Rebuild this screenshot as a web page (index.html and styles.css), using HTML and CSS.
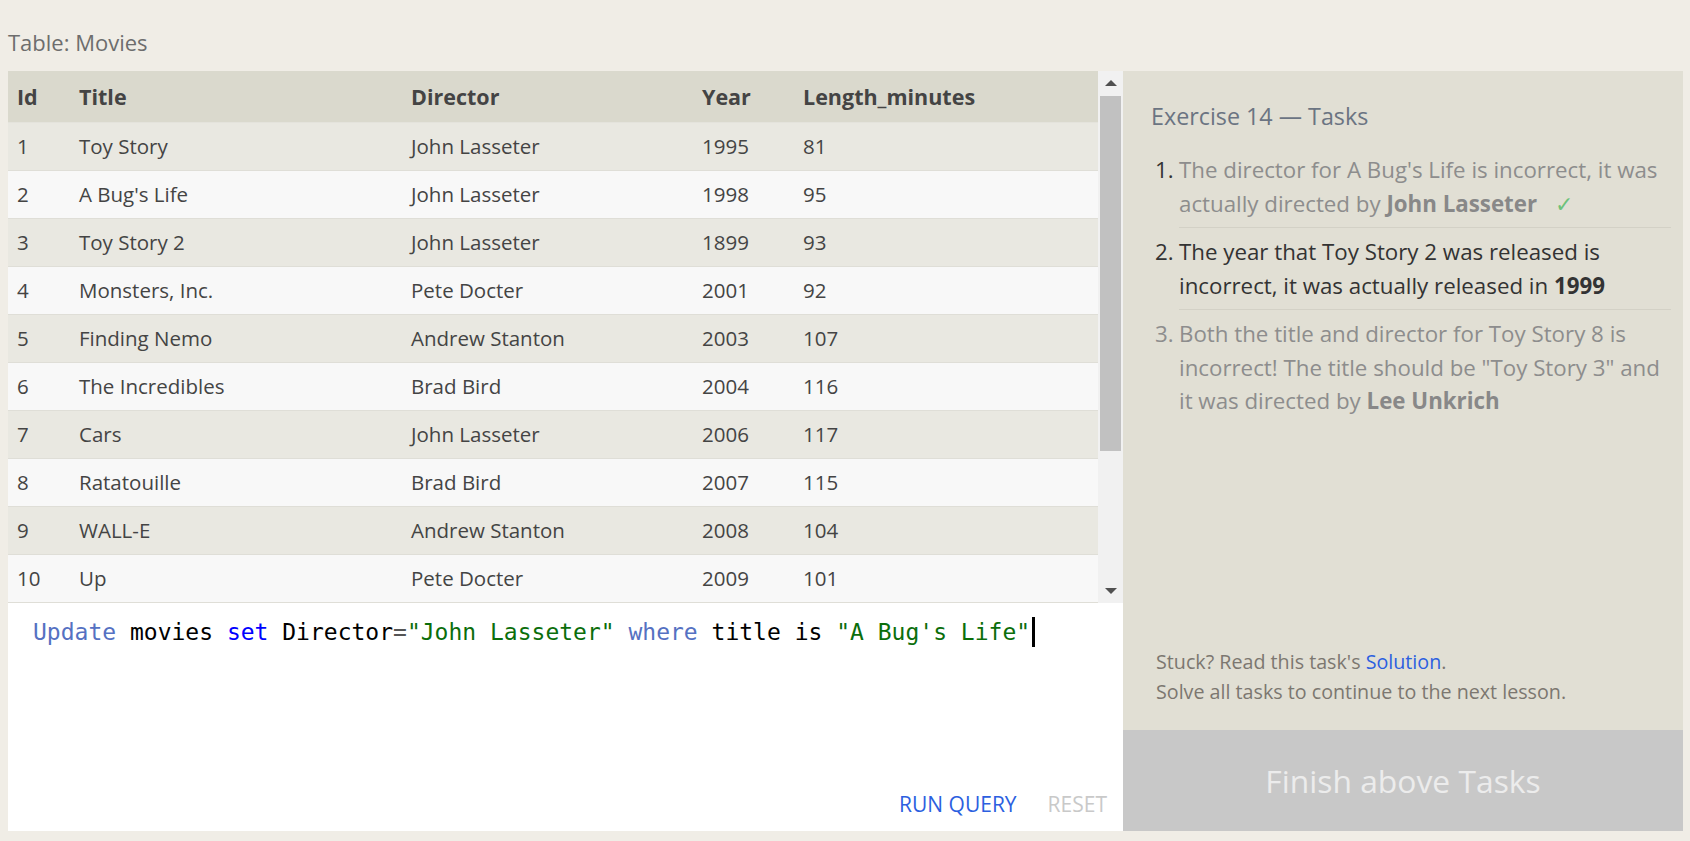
FILE: index.html
```html
<!DOCTYPE html>
<html lang="en">
<head>
<meta charset="utf-8">
<title>SQL Exercise 14</title>
<link rel="stylesheet" href="styles.css">
</head>
<body>
<div class="page">
  <div class="caption">Table: Movies</div>
  <div class="workspace">
    <section class="left">
      <div class="table-view">
        <div class="table-scroll">
          <table class="movies">
            <colgroup>
              <col class="w-id"><col class="w-title"><col class="w-director"><col class="w-year"><col>
            </colgroup>
            <thead>
              <tr><th>Id</th><th>Title</th><th>Director</th><th>Year</th><th>Length_minutes</th></tr>
            </thead>
            <tbody>
              <tr><td>1</td><td>Toy Story</td><td>John Lasseter</td><td>1995</td><td>81</td></tr>
              <tr><td>2</td><td>A Bug's Life</td><td>John Lasseter</td><td>1998</td><td>95</td></tr>
              <tr><td>3</td><td>Toy Story 2</td><td>John Lasseter</td><td>1899</td><td>93</td></tr>
              <tr><td>4</td><td>Monsters, Inc.</td><td>Pete Docter</td><td>2001</td><td>92</td></tr>
              <tr><td>5</td><td>Finding Nemo</td><td>Andrew Stanton</td><td>2003</td><td>107</td></tr>
              <tr><td>6</td><td>The Incredibles</td><td>Brad Bird</td><td>2004</td><td>116</td></tr>
              <tr><td>7</td><td>Cars</td><td>John Lasseter</td><td>2006</td><td>117</td></tr>
              <tr><td>8</td><td>Ratatouille</td><td>Brad Bird</td><td>2007</td><td>115</td></tr>
              <tr><td>9</td><td>WALL-E</td><td>Andrew Stanton</td><td>2008</td><td>104</td></tr>
              <tr><td>10</td><td>Up</td><td>Pete Docter</td><td>2009</td><td>101</td></tr>
            </tbody>
          </table>
        </div>
        <div class="scrollbar">
          <div class="sb-btn"><span class="tri-up"></span></div>
          <div class="sb-track"><div class="sb-thumb"></div></div>
          <div class="sb-btn"><span class="tri-down"></span></div>
        </div>
      </div>
      <div class="editor">
        <div class="code"><span class="kw">Update</span> movies <span class="kw2">set</span> Director<span class="op">=</span><span class="str">"John Lasseter"</span> <span class="kw">where</span> title is <span class="str">"A Bug's Life"</span><span class="cursor"></span></div>
        <div class="actions">
          <button class="run">RUN QUERY</button>
          <button class="reset">RESET</button>
        </div>
      </div>
    </section>
    <aside class="tasks-panel">
      <div class="tasks-body">
        <h2 class="tasks-title">Exercise 14 — Tasks</h2>
        <ol class="task-list">
          <li class="task done"><span class="num">1.</span><span class="task-text">The director for A Bug's Life is incorrect, it was actually directed by <b>John Lasseter</b><span class="check">✓</span></span></li>
          <li class="task active"><span class="num">2.</span><span class="task-text">The year that Toy Story 2 was released is incorrect, it was actually released in <b>1999</b></span></li>
          <li class="task todo"><span class="num">3.</span><span class="task-text">Both the title and director for Toy Story 8 is incorrect! The title should be "Toy Story 3" and it was directed by <b>Lee Unkrich</b></span></li>
        </ol>
      </div>
      <div class="stuck">
        <div>Stuck? Read this task's <a class="solution" href="#">Solution</a>.</div>
        <div>Solve all tasks to continue to the next lesson.</div>
      </div>
      <div class="finish">Finish above Tasks</div>
    </aside>
  </div>
</div>
</body>
</html>
```

FILE: styles.css
```css
* { box-sizing: border-box; }

html, body {
  margin: 0;
  padding: 0;
  background: #f0ede6;
}

body {
  font-family: "Open Sans", "Noto Sans", sans-serif;
  color: #444;
}

.page {
  padding: 28px 7px 10px 8px;
  height: 841px;
  display: flex;
  flex-direction: column;
}

.caption {
  font-size: 22px;
  line-height: 28px;
  height: 28px;
  color: #6d6d6d;
  margin-bottom: 15px;
}

.workspace {
  flex: 1;
  display: grid;
  grid-template-columns: 1115px 560px;
  min-height: 0;
}

.left {
  display: flex;
  flex-direction: column;
  min-height: 0;
}

.table-view {
  height: 532px;
  display: flex;
  background: #f8f8f8;
  overflow: hidden;
}

.table-scroll {
  flex: 1;
  overflow: hidden;
}

.movies {
  width: 100%;
  border-collapse: collapse;
  table-layout: fixed;
  font-size: 20.5px;
}

.w-id { width: 62px; }
.w-title { width: 332px; }
.w-director { width: 291px; }
.w-year { width: 101px; }

.movies th, .movies td {
  text-align: left;
  padding: 0 0 0 9px;
  white-space: nowrap;
}

.movies th {
  height: 51px;
  background: #dad9cd;
  font-weight: 700;
  font-size: 21.5px;
  color: #444;
  border-bottom: 1px solid #e4e3dc;
}

.movies td {
  height: 48px;
  color: #444;
  border-bottom: 1px solid #dfded7;
}

.movies tbody tr:nth-child(odd) td { background: #e9e8e1; }
.movies tbody tr:nth-child(even) td { background: #f8f8f8; }

.scrollbar {
  width: 25px;
  background: #f1f1f1;
  display: flex;
  flex-direction: column;
}

.sb-btn {
  height: 24px;
  display: flex;
  align-items: center;
  justify-content: center;
}

.tri-up, .tri-down {
  width: 0;
  height: 0;
  border-left: 6px solid transparent;
  border-right: 6px solid transparent;
}

.tri-up { border-bottom: 6px solid #505050; }
.tri-down { border-top: 6px solid #505050; }

.sb-track {
  flex: 1;
  padding: 1px 2px 0 2px;
}

.sb-thumb {
  height: 355px;
  background: #c1c1c1;
}

.editor {
  flex: 1;
  background: #fff;
  display: flex;
  flex-direction: column;
  justify-content: space-between;
  padding: 14px 16px 14px 25px;
}

.code {
  font-family: "DejaVu Sans Mono", "Liberation Mono", monospace;
  font-size: 23px;
  line-height: 30px;
  height: 30px;
  color: #000;
  white-space: pre;
}

.code .kw { color: #5571c2; }
.code .kw2 { color: #0000ff; }
.code .op { color: #555; }
.code .str { color: #0b6e0b; }

.cursor {
  display: inline-block;
  width: 3px;
  height: 30px;
  background: #000;
  margin-left: 2px;
  vertical-align: top;
}

.actions {
  display: flex;
  justify-content: flex-end;
  gap: 31px;
}

.actions button {
  border: 0;
  background: none;
  padding: 0;
  font-family: "Open Sans", "Noto Sans", sans-serif;
  font-size: 21px;
  line-height: 26px;
  cursor: pointer;
}

.run { color: #2c5fe0; }
.reset { color: #c9c9c9; }

.tasks-panel {
  background: #e1dfd4;
  display: flex;
  flex-direction: column;
  min-height: 0;
}

.tasks-body {
  flex: 1;
  padding: 30px 12px 0 28px;
}

.tasks-title {
  margin: 0 0 15px 0;
  font-weight: 400;
  font-size: 23.3px;
  line-height: 30px;
  color: #6b7482;
}

.task-list {
  list-style: none;
  margin: 0;
  padding: 0 0 0 4px;
}

.task {
  display: flex;
  font-size: 22.3px;
  line-height: 33.5px;
}

.num {
  width: 24px;
  flex: none;
  color: #333;
  padding-top: 7px;
}

.task-text {
  flex: 1;
  padding: 7px 0 7px 0;
  border-bottom: 1px solid #d3d1c6;
}

.task.todo .task-text { border-bottom: 0; }

.task.done .task-text { color: #8d8d8d; }
.task.done b { color: #888; }
.task.active .task-text { color: #333; }
.task.todo .num, .task.todo .task-text { color: #8d8d8d; }
.task.todo b { color: #888; }

.check {
  color: #6cc27a;
  margin-left: 18px;
}

.stuck {
  padding: 0 12px 23px 33px;
  font-size: 19.7px;
  line-height: 30px;
  color: #7c7770;
}

.solution {
  color: #2c5fe0;
  text-decoration: none;
}

.finish {
  height: 101px;
  background: #c8c8c8;
  color: #ececec;
  font-size: 31.8px;
  display: flex;
  align-items: center;
  justify-content: center;
}
```
